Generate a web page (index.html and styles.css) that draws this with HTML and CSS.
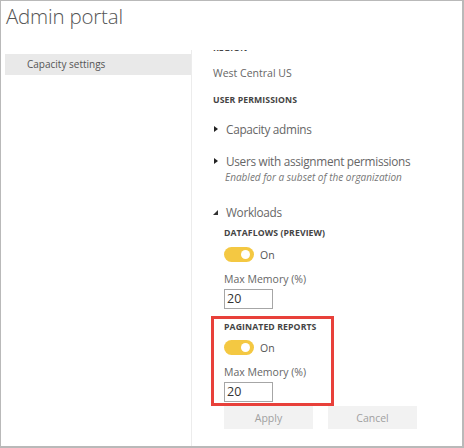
FILE: index.html
```html
<!DOCTYPE html>
<html>
<head>
<meta charset="utf-8">
<link rel="stylesheet" href="styles.css">
</head>
<body>
<div class="frame">
  <h1 class="title">Admin portal</h1>
  <div class="main">
    <nav class="sidebar">
      <div class="nav-item">Capacity settings</div>
    </nav>
    <section class="content">
      <div class="scroll">
        <div class="label region">REGION</div>
        <div class="value">West Central US</div>
        <div class="label perms">USER PERMISSIONS</div>
        <div class="expander first"><span class="tri-right"></span><span>Capacity admins</span></div>
        <div class="expander second"><span class="tri-right"></span><span>Users with assignment permissions</span></div>
        <div class="hint">Enabled for a subset of the organization</div>
        <div class="expander workloads"><span class="tri-open"></span><span>Workloads</span></div>
        <div class="workload">
          <div class="label wl-label">DATAFLOWS (PREVIEW)</div>
          <div class="toggle-row"><span class="toggle"><span class="knob"></span></span><span class="on">On</span></div>
          <div class="field-label">Max Memory (%)</div>
          <div class="input">20</div>
        </div>
        <div class="workload highlight">
          <div class="label wl-label">PAGINATED REPORTS</div>
          <div class="toggle-row"><span class="toggle"><span class="knob"></span></span><span class="on">On</span></div>
          <div class="field-label">Max Memory (%)</div>
          <div class="input">20</div>
        </div>
        <div class="buttons">
          <button class="btn">Apply</button>
          <button class="btn">Cancel</button>
        </div>
      </div>
    </section>
  </div>
</div>
</body>
</html>
```

FILE: styles.css
```css
* { box-sizing: border-box; }
html, body { margin: 0; padding: 0; background: #fff; }
body { font-family: "Open Sans", "Noto Sans", sans-serif; color: #666; }

.frame {
  width: 464px;
  height: 448px;
  border-top: 1px solid #b9b9b9;
  border-left: 1px solid #b9b9b9;
  border-right: 2px solid #b9b9b9;
  border-bottom: 2px solid #b9b9b9;
  display: flex;
  flex-direction: column;
  overflow: hidden;
}

.title {
  margin: 0;
  padding: 1px 0 0 5px;
  height: 49px;
  font-size: 20.5px;
  font-weight: 300;
  color: #555;
  line-height: 28px;
  letter-spacing: -0.2px;
}

.main {
  flex: 1;
  display: flex;
  min-height: 0;
}

.sidebar {
  width: 191px;
  padding: 4px 0 0 4px;
  border-right: 1px solid #ececec;
}

.nav-item {
  height: 21px;
  background: #e9e9e9;
  font-size: 10px;
  line-height: 21px;
  padding-left: 22px;
  color: #555;
}

.content {
  flex: 1;
  overflow: hidden;
  padding-left: 21px;
}

.scroll { margin-top: -8px; }

.label {
  font-size: 8.7px;
  font-weight: 700;
  line-height: 12px;
  color: #444;
  letter-spacing: 0.1px;
}

.value {
  font-size: 10.5px;
  line-height: 16px;
  margin-top: 11px;
  color: #666;
}

.perms { margin-top: 13px; }

.expander {
  display: flex;
  align-items: center;
  font-size: 11.8px;
  letter-spacing: -0.3px;
  line-height: 18px;
  color: #666;
}
.expander.first { margin-top: 14px; }
.expander.second { margin-top: 14px; }
.expander.workloads { margin-top: 19px; }

.tri-right {
  width: 0; height: 0;
  border-top: 3.5px solid transparent;
  border-bottom: 3.5px solid transparent;
  border-left: 4px solid #222;
  margin: 0 8px 0 1px;
}

.tri-open {
  width: 0; height: 0;
  border-bottom: 5px solid #333;
  border-left: 5px solid transparent;
  margin: 0 8px 0 0;
}

.hint {
  font-size: 10px;
  font-style: italic;
  line-height: 14px;
  padding-left: 12px;
  color: #777;
}

.workload { padding-left: 11px; }
.wl-label { margin-top: 6px; }

.toggle-row {
  display: flex;
  align-items: center;
  margin-top: 8px;
  height: 15px;
}

.toggle {
  width: 30px;
  height: 15px;
  border-radius: 8px;
  background: #f4c842;
  position: relative;
}

.knob {
  position: absolute;
  right: 4px;
  top: 3px;
  width: 9px;
  height: 9px;
  border-radius: 50%;
  background: #fff;
}

.on {
  font-size: 10.5px;
  margin-left: 6px;
  color: #555;
}

.field-label {
  margin-top: 10px;
  font-size: 10.5px;
  line-height: 14px;
  color: #666;
}

.input {
  margin-top: 3px;
  width: 49px;
  height: 20px;
  border: 1px solid #a6a6a6;
  font-size: 12.5px;
  line-height: 18px;
  padding-left: 2px;
  color: #333;
}

.highlight {
  margin-top: 7px;
  margin-left: -2px;
  width: 123px;
  border: 3px solid #e8403a;
  padding: 2px 0 1px 10px;
}
.highlight .wl-label { margin-top: 0; }
.highlight .toggle-row { margin-top: 7px; }

.buttons {
  display: flex;
  gap: 15px;
  padding-left: 11px;
}

.btn {
  width: 89px;
  height: 23px;
  border: none;
  background: #f2f2f2;
  color: #a0a0a0;
  font-family: "Open Sans", "Noto Sans", sans-serif;
  font-size: 10.5px;
  padding: 0;
}
```
